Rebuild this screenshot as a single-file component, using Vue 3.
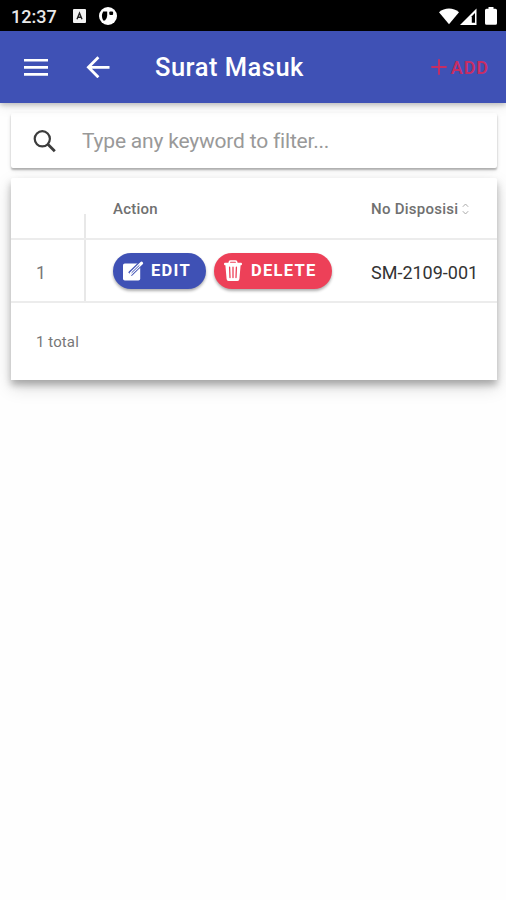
<script setup>
import { ref } from 'vue'

const keyword = ref('')
const rows = [{ id: 1, number: 'SM-2109-001' }]
</script>

<template>
  <div class="screen">
    <div class="status">
      <span class="clock">12:37</span>
      <svg class="badge-a" width="13" height="14" viewBox="0 0 13 14">
        <rect width="13" height="14" rx="1" fill="#f2f2f2" />
        <path d="M4 10.2 6.5 4 9 10.2M5 8.2H8" fill="none" stroke="#222" stroke-width="1.4" />
      </svg>
      <svg class="badge-p" width="18" height="18" viewBox="0 0 18 18">
        <circle cx="9" cy="9" r="9" fill="#fff" />
        <path d="M4.2 4.4Q1.6 9 4.2 13.6H6Q8.2 11.5 8.2 8.5V4.4Z" fill="#000" />
        <rect x="10.3" y="4.5" width="3.8" height="3.6" rx="1" fill="#000" />
      </svg>
      <span class="spacer"></span>
      <svg width="20" height="17" viewBox="0 0 20 17">
        <path d="M0 4.2C5.6-.6 14.4-.6 20 4.2L10 16.3Z" fill="#fff" />
      </svg>
      <svg class="signal" width="17" height="17" viewBox="0 0 17 17">
        <path d="M0 17 16.5.5V17Z" fill="#fff" />
        <path d="M11.8 8.2 15 5V14.8H11.8Z" fill="#000" />
      </svg>
      <svg class="battery" width="12" height="18" viewBox="0 0 12 18">
        <path d="M3.5 0H8.5V1.8H10.5Q12 1.8 12 3.3V16.3Q12 17.8 10.5 17.8H1.5Q0 17.8 0 16.3V3.3Q0 1.8 1.5 1.8H3.5Z" fill="#fff" />
      </svg>
    </div>

    <header class="bar">
      <svg class="menu" width="24" height="18" viewBox="0 0 24 18">
        <path d="M0 2.2H24M0 9.4H24M0 16.4H24" stroke="#fff" stroke-width="2.6" />
      </svg>
      <svg class="back" width="24" height="22" viewBox="0 0 24 22">
        <path d="M23.5 11.3H3M12.4 1.3 2.4 11.3 12.4 21.3" fill="none" stroke="#fff" stroke-width="2.8" />
      </svg>
      <h1>Surat Masuk</h1>
      <button class="add">
        <svg width="16" height="16" viewBox="0 0 16 16">
          <path d="M8 .3V15.7M.3 8H15.7" stroke="currentColor" stroke-width="1.9" />
        </svg>
        <span>ADD</span>
      </button>
    </header>

    <main>
      <div class="search">
        <svg width="24" height="24" viewBox="0 0 24 24" fill="none" stroke="#3c3c3c">
          <circle cx="9.3" cy="9.8" r="7.6" stroke-width="2.2" />
          <path d="M14.6 15.1 21.8 22.3" stroke-width="2.8" />
        </svg>
        <input v-model="keyword" type="text" placeholder="Type any keyword to filter..." />
      </div>

      <section class="table">
        <div class="row head">
          <div class="index"></div>
          <div class="action">Action</div>
          <div class="number">
            <span>No Disposisi</span>
            <svg width="7" height="12" viewBox="0 0 7 12">
              <path d="M.8 3.8 3.5 1 6.2 3.8M.8 8.2 3.5 11 6.2 8.2" fill="none" stroke="#aaa" stroke-width="1" />
            </svg>
          </div>
        </div>
        <div v-for="row in rows" :key="row.id" class="row body">
          <div class="index">{{ row.id }}</div>
          <div class="action">
            <button class="pill edit">
              <svg width="21" height="20" viewBox="0 0 21 20">
                <rect x="0" y="2.5" width="17.2" height="17" rx="1.8" fill="#fff" />
                <path d="M7 13.2 19 1.5" stroke="#3f51b5" stroke-width="5.2" />
                <path d="M8.4 12 18.6 2.2" stroke="#fff" stroke-width="3.1" stroke-linecap="round" />
                <path d="M6.2 14.2 7 11 9.4 13.4Z" fill="#fff" />
                <path d="M8.6 11.8 16.4 4.3" stroke="#3f51b5" stroke-width="1" />
              </svg>
              <span>EDIT</span>
            </button>
            <button class="pill delete">
              <svg width="18" height="21" viewBox="0 0 18 21">
                <path d="M5.3 3.2V2.2Q5.3 1 6.5 1H11.5Q12.7 1 12.7 2.2V3.2" fill="none" stroke="#fff" stroke-width="1.6" />
                <path d="M1 2.8H17Q18 2.8 18 4T17 5.2H16.6L15.4 19Q15.2 21 13.5 21H4.5Q2.8 21 2.6 19L1.4 5.2H1Q0 5.2 0 4T1 2.8Z" fill="#fff" />
                <path d="M5.6 7.2 6 17.5M9 7.2V17.5M12.4 7.2 12 17.5" stroke="#ed4058" stroke-width="1.3" stroke-linecap="round" />
              </svg>
              <span>DELETE</span>
            </button>
          </div>
          <div class="number">{{ row.number }}</div>
        </div>
        <footer>{{ rows.length }} total</footer>
      </section>
    </main>
  </div>
</template>

<style>
body {
  background: #fff;
}
</style>

<style scoped>
.screen {
  height: 900px;
  overflow: hidden;
  background: #fefefe;
  font-family: Roboto, "Liberation Sans", sans-serif;
}
.screen * {
  box-sizing: border-box;
}
button {
  border: 0;
  font-family: inherit;
}
.status {
  height: 31px;
  padding: 1px 9px 0 11px;
  display: flex;
  align-items: center;
  background: #000;
  color: #e8e8e8;
}
.clock {
  width: 62px;
  font-size: 18px;
  font-weight: 500;
}
.badge-p {
  margin-left: 13px;
}
.spacer {
  flex: 1;
}
.signal {
  margin-left: 1px;
}
.battery {
  margin-left: 8px;
}
.bar {
  position: relative;
  height: 72px;
  padding: 0 18px 0 24px;
  display: flex;
  align-items: center;
  background: #3f51b5;
  box-shadow: 0 2px 5px rgba(0, 0, 0, 0.22), 0 4px 12px rgba(0, 0, 0, 0.08);
}
.back {
  margin-left: 38px;
}
h1 {
  flex: 1;
  margin: 0 0 0 45px;
  color: #fff;
  font-size: 25.5px;
  font-weight: 500;
  line-height: 30px;
  letter-spacing: 0.5px;
}
.add {
  display: flex;
  align-items: center;
  gap: 4px;
  padding: 0;
  background: none;
  color: #c72d63;
  font-size: 18px;
  font-weight: 600;
  letter-spacing: 0.9px;
}
.add span {
  margin-right: -1px;
}
main {
  padding: 10px 9px 0 11px;
}
.search {
  height: 55px;
  display: flex;
  align-items: center;
  padding-left: 22px;
  background: #fff;
  border-radius: 2px;
  box-shadow: 0 2px 2px rgba(0, 0, 0, 0.26), 0 2px 5px rgba(0, 0, 0, 0.1);
}
input {
  flex: 1;
  min-width: 0;
  margin-left: 25px;
  padding: 0;
  border: 0;
  outline: 0;
  background: none;
  color: #333;
  font: 21px Roboto, sans-serif;
  letter-spacing: -0.2px;
}
input::placeholder {
  color: #999;
  opacity: 1;
}
.table {
  height: 202px;
  margin-top: 10px;
  background: #fff;
  border-radius: 2px 2px 0 0;
  box-shadow: 0 5px 7px rgba(0, 0, 0, 0.26), 0 7px 18px rgba(0, 0, 0, 0.15);
}
.row {
  display: grid;
  grid-template-columns: 75px 285px 1fr;
  align-items: center;
  border-bottom: 2px solid #ececec;
}
.head {
  height: 62px;
  color: #707070;
  font-size: 15px;
  font-weight: 500;
  letter-spacing: 0.25px;
}
.head .action,
.head .number {
  padding-top: 2px;
}
.body {
  height: 63px;
}
.index {
  height: 100%;
  display: flex;
  align-items: center;
  padding: 5px 0 0 25px;
  border-right: 2px solid #e8e8e8;
  color: #777;
  font-size: 17.5px;
}
.head .index {
  height: 24px;
  align-self: end;
}
.action {
  display: flex;
  gap: 8px;
  padding-left: 27px;
}
.number {
  display: flex;
  align-items: center;
  white-space: nowrap;
}
.head .number {
  gap: 4px;
}
.body .number {
  padding-top: 3px;
  color: #333;
  font-size: 18px;
}
.pill {
  height: 36px;
  display: flex;
  align-items: center;
  padding: 0 0 0 10px;
  border-radius: 18px;
  color: #fff;
  font-size: 16.5px;
  font-weight: 700;
  letter-spacing: 1.3px;
  box-shadow: 0 2px 3px rgba(0, 0, 0, 0.32);
}
.pill span {
  padding-top: 1px;
  line-height: 20px;
}
.edit {
  width: 93px;
  gap: 7px;
  background: #3f51b5;
}
.delete {
  width: 118px;
  gap: 9px;
  background: #ed4058;
}
footer {
  height: 77px;
  display: flex;
  align-items: center;
  padding-left: 25px;
  color: #777;
  font-size: 15px;
  letter-spacing: 0.1px;
}
</style>
